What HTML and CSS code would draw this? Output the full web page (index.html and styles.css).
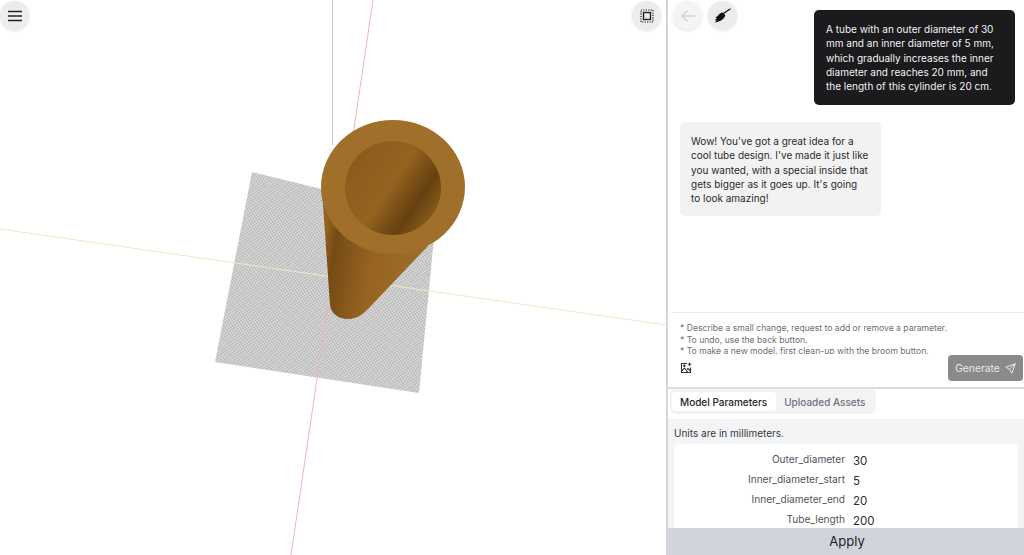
FILE: index.html
```html
<!DOCTYPE html>
<html lang="en">
<head>
<meta charset="utf-8">
<title>Model chat</title>
<link rel="stylesheet" href="styles.css">
</head>
<body>
<div class="app">
  <main class="viewer">
    <svg class="scene" viewBox="0 0 666 555" width="666" height="555">
      <defs>
        <pattern id="chk" width="3.500" height="3.500" patternUnits="userSpaceOnUse" patternTransform="rotate(13)">
          <rect width="3.500" height="3.500" fill="#dcdcdc"/>
          <rect width="1.750" height="1.750" fill="#b8b8b8"/>
          <rect x="1.750" y="1.750" width="1.750" height="1.750" fill="#b8b8b8"/>
        </pattern>
        <linearGradient id="body" x1="322" y1="250" x2="440" y2="270" gradientUnits="userSpaceOnUse">
          <stop offset="0" stop-color="#94641f"/>
          <stop offset=".1" stop-color="#744b16"/>
          <stop offset=".42" stop-color="#966420"/>
          <stop offset="1" stop-color="#a0702a"/>
        </linearGradient>
        <linearGradient id="hole" x1="345" y1="160" x2="441" y2="225" gradientUnits="userSpaceOnUse">
          <stop offset="0" stop-color="#895b1c"/>
          <stop offset=".45" stop-color="#94631f"/>
          <stop offset=".72" stop-color="#65400f"/>
          <stop offset=".88" stop-color="#85571a"/>
          <stop offset="1" stop-color="#8a5c1d"/>
        </linearGradient>
      </defs>
      <line x1="332.500" y1="0" x2="332.500" y2="145" stroke="#c9c6e6"/>
      <polygon points="252,172 436,217 419,393 215,362" fill="url(#chk)"/>
      <line x1="373" y1="0" x2="291" y2="555" stroke="#ecb8af"/>
      <line x1="0" y1="229" x2="666" y2="325" stroke="#ece9c6"/>
      <path d="M322 190 L330 305 C331 313 338 319 348 319 C356 319 362 315 367 310 L428 246 L428 190 Z" fill="url(#body)"/>
      <ellipse cx="393" cy="187" rx="72" ry="67" fill="#a0702a"/>
      <ellipse cx="393" cy="188" rx="48" ry="47" fill="url(#hole)"/>
    </svg>
    <button class="round round-menu" type="button" aria-label="Menu">
      <svg width="16" height="14" viewBox="0 0 16 14"><path d="M1 2.500H15M1 7H15M1 11.500H15" stroke="#222" stroke-width="1.700"/></svg>
    </button>
    <button class="round round-fit" type="button" aria-label="Fit view">
      <svg width="14" height="14" viewBox="0 0 14 14" fill="none" stroke="#222"><rect x="3.500" y="3.500" width="7" height="7" stroke-width="1.400"/><rect x="1" y="1" width="12" height="12" stroke-width="1.200" stroke-dasharray="1.200 1.200"/></svg>
    </button>
  </main>
  <aside class="panel">
    <section class="chat">
      <div class="tools">
        <button class="round round-off" type="button" aria-label="Back">
          <svg width="16" height="14" viewBox="0 0 16 14" fill="none" stroke="#d2d2d2" stroke-width="1.500"><path d="M15 7H2M7.500 1.500L2 7L7.500 12.500"/></svg>
        </button>
        <button class="round" type="button" aria-label="Clean up">
          <svg width="17" height="15" viewBox="0 0 17 15"><path d="M16.500 .8L9.500 5.500" stroke="#111" stroke-width="1.300"/><path d="M9 4.500L11.300 7.200C10.800 9.500 9 11.300 7 12.500C5 13.600 2.800 14.300 .5 14.500L2.900 12.500L.6 12.300L3 10.300L1.300 9.700C3.300 9 4.400 6.700 6 5.600C7 4.900 8 4.500 9 4.500Z" fill="#111"/></svg>
        </button>
      </div>
      <div class="bubble bubble-user">A tube with an outer diameter of 30 mm and an inner diameter of 5 mm, which gradually increases the inner diameter and reaches 20 mm, and the length of this cylinder is 20 cm.</div>
      <div class="bubble bubble-bot">Wow! You've got a great idea for a cool tube design. I've made it just like you wanted, with a special inside that gets bigger as it goes up. It's going to look amazing!</div>
    </section>
    <section class="composer">
      <div class="hints">
        <p>* Describe a small change, request to add or remove a parameter.</p>
        <p>* To undo, use the back button.</p>
        <p>* To make a new model, first clean-up with the broom button.</p>
      </div>
      <div class="composer-row">
        <svg class="attach" width="12" height="12" viewBox="0 0 12 12" fill="none" stroke="#333" stroke-width="1.100"><path d="M7 1.500H1.500V10.500H10.500V5.500"/><path d="M1.500 9L4.500 6L8 10.500M7 7.500L8 6.500L10.500 9"/><path d="M9.500 .5V4M7.800 2.200H11.300"/><circle cx="4.300" cy="3.800" r=".7"/></svg>
        <button class="generate" type="button">Generate
          <svg width="11" height="11" viewBox="0 0 11 11" fill="none" stroke="#e8e8e8"><path d="M10.300 .7L.8 4.200L4.500 6.300L6.800 10.300ZM10.300 .7L4.500 6.300"/></svg>
        </button>
      </div>
    </section>
    <nav class="tabs-bar">
      <div class="tabs">
        <span class="tab tab-active">Model Parameters</span>
        <span class="tab">Uploaded Assets</span>
      </div>
    </nav>
    <section class="params">
      <div class="units">Units are in millimeters.</div>
      <div class="card">
        <div class="row"><span class="name">Outer_diameter</span><span class="val">30</span></div>
        <div class="row"><span class="name">Inner_diameter_start</span><span class="val">5</span></div>
        <div class="row"><span class="name">Inner_diameter_end</span><span class="val">20</span></div>
        <div class="row"><span class="name">Tube_length</span><span class="val">200</span></div>
      </div>
    </section>
    <button class="apply" type="button">Apply</button>
  </aside>
</div>
</body>
</html>
```
FILE: styles.css
```css
* { box-sizing: border-box; }
html, body { margin: 0; height: 100%; overflow: hidden; background: #fff; }
body { font-family: Inter, "Liberation Sans", sans-serif; color: #222; }
p { margin: 0; }
button { font-family: inherit; border: 0; padding: 0; }

.app { display: flex; width: 1024px; height: 555px; }

.viewer { position: relative; width: 666px; flex: none; overflow: hidden; }
.scene { display: block; }

.round {
  width: 29px; height: 29px; border-radius: 50%;
  background: #ececec; box-shadow: 0 1px 3px rgba(0,0,0,.1);
  display: flex; align-items: center; justify-content: center;
}
.round-menu { position: absolute; left: 0; top: 1px; }
.round-fit { position: absolute; left: 632px; top: 1px; }
.round-off { background: #f4f4f4; }

.panel {
  width: 358px; flex: none; display: flex; flex-direction: column;
  border-left: 2px solid #d4d6da;
}
.chat { height: 312px; flex: none; display: flex; flex-direction: column; padding: 10px 9px 0 12px; position: relative; }
.tools { position: absolute; left: 5px; top: 1px; display: flex; gap: 6px; }

.bubble { width: 201px; font-size: 10px; line-height: 14.300px; border-radius: 5px; }
.bubble-user { align-self: flex-end; background: #1b1b1d; color: #f2f2f2; padding: 12px; height: 95px; }
.bubble-bot { margin-top: 17px; background: #f2f2f3; color: #2a2a2a; padding: 12px 12px 12px 11px; height: 94px; }

.composer { height: 77px; flex: none; padding: 10px 0 0 12px; border-top: 1px solid #ececec; border-bottom: 2px solid #dcdcdc; border-radius: 6px 0 0 0; }
.hints { font-size: 8.600px; line-height: 11.700px; color: #6c6f75; height: 31px; overflow: hidden; }
.composer-row { position: relative; display: flex; align-items: center; height: 12px; margin-top: 8px; }
.attach { display: block; }
.generate {
  position: absolute; left: 268px; top: -7px; width: 75px; height: 26px; border-radius: 4px;
  background: #8a8a8a; color: #e8e8e8; font-size: 10.300px;
  display: flex; align-items: center; justify-content: center; gap: 5px;
}

.tabs-bar { height: 30px; flex: none; padding: 0 0 0 2px; }
.tabs { display: inline-flex; height: 25px; padding: 3px 2px; background: #f3f3f4; border-radius: 5px; font-size: 10px; color: #6b7280; font-weight: 500; }
.tab { display: flex; align-items: center; padding: 0 9px 0 8px; border-radius: 4px; }
.tab-active { background: #fff; color: #23262b; }

.params { flex: 1; min-height: 0; background: #f3f4f5; padding: 8px 6px 0 6px; overflow: hidden; }
.units { font-size: 10px; line-height: 13px; color: #33373d; margin-bottom: 4px; }
.card { background: #fff; border-radius: 5px; padding: 7px 0 0; height: 90px; }
.row { display: flex; align-items: center; height: 20px; }
.name { width: 171px; text-align: right; font-size: 10.100px; color: #50545a; position: relative; top: -2px; }
.val { margin-left: 8px; font-size: 11.500px; color: #2a2d31; }

.apply { height: 27px; flex: none; width: 100%; padding: 0 0 2px 2px; background: #d1d5db; color: #1d2024; font-size: 13px; }
```
